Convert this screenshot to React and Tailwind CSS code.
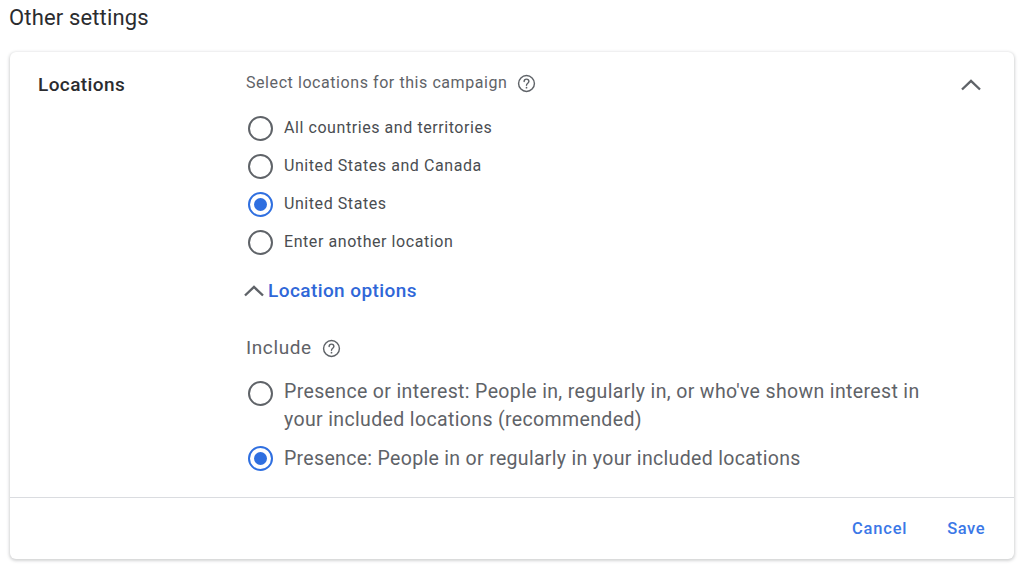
const roboto = "font-['Roboto',sans-serif]";

function Help({ size = 19 }) {
  return (
    <svg width={size} height={size} viewBox="0 0 24 24" fill="none" className="shrink-0 text-[#5f6368]">
      <circle cx="12" cy="12" r="10" stroke="currentColor" strokeWidth="1.8" />
      <path d="M9 9.5a3 3 0 0 1 6 0c0 2-3 2.3-3 4.7" stroke="currentColor" strokeWidth="1.8" strokeLinecap="round" />
      <circle cx="12" cy="17.3" r="1.1" fill="currentColor" />
    </svg>
  );
}

function Chevron({ className }) {
  return (
    <svg width="24" height="24" viewBox="0 0 24 24" fill="none" className={className}>
      <path d="M3 16.5 12 8l9 8.5" stroke="#5f6368" strokeWidth="2.4" />
    </svg>
  );
}

function Radio({ checked }) {
  return (
    <span
      className={`flex h-[25px] w-[25px] shrink-0 items-center justify-center rounded-full border-[2.5px] ${
        checked ? "border-[#2f6fe0]" : "border-[#5f6368]"
      }`}
    >
      {checked && <span className="h-[13px] w-[13px] rounded-full bg-[#2f6fe0]" />}
    </span>
  );
}

function Option({ checked, children }) {
  return (
    <div className="flex h-[38px] items-center gap-[11px] pl-[2px]">
      <Radio checked={checked} />
      <span className="text-[16px] tracking-[0.57px] text-[#4a4d51]">{children}</span>
    </div>
  );
}

export default function App() {
  return (
    <div className={`h-[569px] w-[1024px] overflow-hidden bg-white ${roboto}`}>
      <div className="flex h-[52px] items-start px-[9px] pt-[5px]">
        <h1 className="text-[22px] leading-[26px] tracking-[0.15px] text-[#2b2c2f]">Other settings</h1>
      </div>
      <div className="mx-[10px] h-[507px] rounded-[6px] bg-white shadow-[0_1px_3px_1px_rgba(60,64,67,0.22)]">
        <div className="flex h-[445px]">
          <div className="w-[236px] pl-[28px] pt-[20px] text-[19px] leading-[26px] font-medium tracking-[0.4px] text-[#2b2c2f]">
            Locations
          </div>
          <div className="flex-1 pt-[19px]">
            <div className="flex items-start justify-between pr-[31px]">
              <div className="flex items-center gap-[10px] pt-[1px]">
                <span className="text-[16px] leading-[22px] tracking-[0.57px] text-[#5f6368]">
                  Select locations for this campaign
                </span>
                <Help />
              </div>
              <Chevron className="mt-[2px]" />
            </div>
            <div className="mt-[12px]">
              <Option>All countries and territories</Option>
              <Option>United States and Canada</Option>
              <Option checked>United States</Option>
              <Option>Enter another location</Option>
            </div>
            <div className="mt-[18px] flex h-[24px] items-center gap-[2px] -ml-[4px]">
              <Chevron />
              <span className="text-[19px] tracking-[0.42px] font-medium text-[#2f67d8]">Location options</span>
            </div>
            <div className="mt-[33px] flex h-[24px] items-center gap-[10px]">
              <span className="text-[19px] tracking-[0.6px] text-[#5f6368]">Include</span>
              <Help />
            </div>
            <div className="mt-[18px] flex gap-[11px] pl-[2px]">
              <div className="pt-[3px]"><Radio /></div>
              <p className="w-[650px] text-[19.5px] leading-[28px] tracking-[0.36px] text-[#5f6368]">
                Presence or interest: People in, regularly in, or who've shown interest in your included locations (recommended)
              </p>
            </div>
            <div className="mt-[10px] flex items-center gap-[11px] pl-[2px]">
              <Radio checked />
              <span className="text-[19.5px] leading-[29px] tracking-[0.32px] text-[#5f6368]">
                Presence: People in or regularly in your included locations
              </span>
            </div>
          </div>
        </div>
        <div className="flex h-[62px] items-center justify-end gap-[40px] border-t border-[#dadce0] pr-[29px] pt-[2px]">
          <button className="text-[16.5px] font-medium tracking-[0.8px] text-[#3b78e7]">Cancel</button>
          <button className="text-[16.5px] font-medium tracking-[0.5px] text-[#3b78e7]">Save</button>
        </div>
      </div>
    </div>
  );
}
